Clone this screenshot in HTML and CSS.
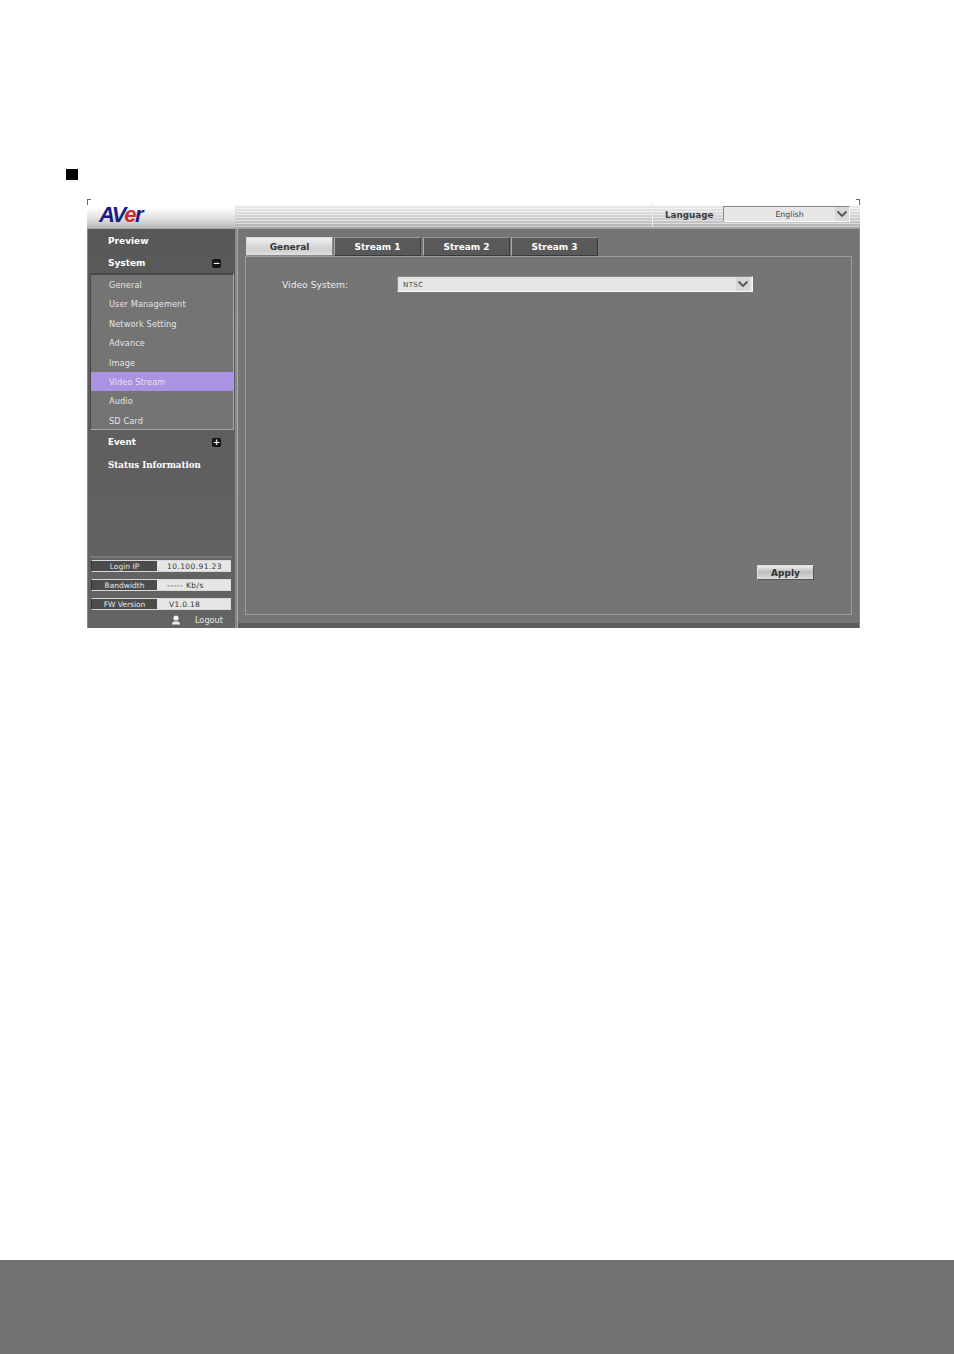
FILE: index.html
```html
<!DOCTYPE html>
<html lang="en">
<head>
<meta charset="utf-8">
<title>Video Stream</title>
<link rel="stylesheet" href="styles.css">
</head>
<body>
<main class="sheet">
  <div class="bullet"></div>
  <section class="app">
    <header class="topbar">
      <div class="logo-cell"><span class="logo">AV<span class="logo-e">e</span>r</span></div>
      <div class="top-fill"></div>
      <div class="lang">
        <span class="lang-label">Language</span>
        <div class="select lang-select">
          <span class="lang-value">English</span>
          <span class="arrow"><svg viewBox="0 0 12 8" width="12" height="8"><path d="M1.500 1.500 6 6l4.500-4.500" fill="none" stroke="#555" stroke-width="1.800"/></svg></span>
        </div>
      </div>
    </header>
    <div class="body">
      <aside class="side">
        <nav class="nav">
          <div class="nav-head">Preview</div>
          <div class="nav-head">System<span class="tog">&minus;</span></div>
          <ul class="sub">
            <li>General</li>
            <li>User Management</li>
            <li>Network Setting</li>
            <li>Advance</li>
            <li>Image</li>
            <li class="on">Video Stream</li>
            <li>Audio</li>
            <li>SD Card</li>
          </ul>
          <div class="nav-head event">Event<span class="tog">+</span></div>
          <div class="nav-head status">Status Information</div>
        </nav>
        <div class="info">
          <div class="info-row"><span class="k">Login IP</span><span class="v ip">10.100.91.23</span></div>
          <div class="info-row"><span class="k">Bandwidth</span><span class="v dash">----- Kb/s</span></div>
          <div class="info-row"><span class="k">FW Version</span><span class="v vers">V1.0.18</span></div>
        </div>
        <div class="logout">
          <svg class="user" viewBox="0 0 10 10" width="10" height="10"><circle cx="5" cy="3" r="2.600" fill="#f2f2f2"/><path d="M1 9.500c0-2.500 1.500-3 4-3s4 .5 4 3z" fill="#f2f2f2"/></svg>
          <span>Logout</span>
        </div>
      </aside>
      <div class="content">
        <div class="tabs">
          <div class="tab active">General</div>
          <div class="tab">Stream 1</div>
          <div class="tab t3">Stream 2</div>
          <div class="tab">Stream 3</div>
        </div>
        <div class="panel">
          <div class="field">
            <label class="field-label">Video System:</label>
            <div class="select sys-select">
              <span class="sys-value">NTSC</span>
              <span class="arrow sys-arrow"><svg viewBox="0 0 12 8" width="12" height="8"><path d="M1.500 1.500 6 6l4.500-4.500" fill="none" stroke="#555" stroke-width="1.800"/></svg></span>
            </div>
          </div>
          <div class="actions"><button class="apply" type="button">Apply</button></div>
        </div>
        <div class="strip"></div>
      </div>
    </div>
  </section>
</main>
<footer class="foot"></footer>
</body>
</html>
```
FILE: styles.css
```css
* { box-sizing: border-box; }
html, body { margin: 0; padding: 0; background: #fff; }
body { width: 954px; height: 1354px; display: flex; flex-direction: column; font-family: "DejaVu Sans", Verdana, sans-serif; overflow: hidden; }
.sheet { height: 1260px; padding-top: 169px; }
.foot { height: 94px; background: #727272; }
.bullet { width: 12px; height: 11px; background: #000; margin-left: 66px; }
.app { width: 773px; height: 429px; margin: 19px 0 0 87px; display: flex; flex-direction: column; }

.topbar { position: relative; height: 30px; display: flex; background:
  linear-gradient(to bottom, #fff 0 6px, transparent 6px),
  repeating-linear-gradient(to bottom, rgba(255,255,255,.4) 0 1px, rgba(0,0,0,.04) 1px 3px),
  linear-gradient(to bottom, #fff 0, #ececec 35%, #c8c8c8 85%, #aaa 100%);
  border-bottom: 1px solid #a2a2a2; }
.topbar::before, .topbar::after { content: ""; position: absolute; top: 0; width: 3px; height: 5px; border-top: 1px solid #666; }
.topbar::before { left: 0; border-left: 1px solid #666; }
.topbar::after { right: 0; border-right: 1px solid #666; }
.logo-cell { width: 148px; padding: 4px 0 0 12px; background: linear-gradient(to bottom, #fff 0, #fff 30%, #dedede 70%, #b8b8b8 100%); }
.logo { font: italic bold 22px/24px "Liberation Sans", Arial, sans-serif; color: #1c1a86; letter-spacing: -1.500px; }
.logo-e { color: #cf2b2b; }
.top-fill { flex: 1; }
.lang { width: 208px; display: flex; align-items: flex-start; border-left: 1px solid #eee; margin: 3px 0 2px; }
.lang-label { font-size: 8.800px; line-height: 12px; font-weight: bold; color: #3c3c3c; margin: 7px 0 0 12px; width: 58px; }
.select { display: flex; align-items: center; background: #e6e6e6; border: 1px solid #8a8a7e; border-right-color: #fafafa; border-bottom-color: #fafafa; }
.lang-select { width: 127px; height: 16px; margin-top: 4px; }
.lang-value { flex: 1; font-size: 7.800px; color: #444; text-align: center; padding-left: 20px; }
.arrow { width: 14px; height: 14px; background: #d8d8d8; display: flex; align-items: center; justify-content: center; }
.sys-arrow { margin-right: 2px; }

.body { flex: 1; display: flex; border-left: 1px solid #888; border-right: 1px solid #888; }
.side { width: 148px; display: flex; flex-direction: column; background: linear-gradient(to bottom, #585858, #646464); }
.nav { flex: 1; }
.nav-head { height: 22px; padding: 2px 14px 0 20px; display: flex; align-items: center; justify-content: space-between; color: #fff; font-size: 9px; font-weight: bold; }
.tog { width: 9px; height: 9px; border-radius: 2px; background: #141414; color: #fff; font-size: 9px; line-height: 9px; text-align: center; }
.sub { list-style: none; margin: 0 1px 0 2px; padding: 0; height: 157px; background: #747474; border: 1px solid #4a4a4a; border-bottom-color: #a8a8a8; border-right-color: #a8a8a8; border-top-width: 2px; }
.sub li { height: 19.400px; padding: 1px 0 0 18px; line-height: 19px; color: #e4e4e4; font-size: 8.200px; letter-spacing: .1px; }
.sub li.on { background: #ab93e3; }
.event { margin-top: 1px; padding-top: 0; font-size: 8.700px; }
.status { margin-top: 1px; padding-top: 0; font-family: "DejaVu Serif", serif; font-size: 8.700px; }
.info { margin: 0 3px 0 2px; display: flex; flex-direction: column; gap: 7px; padding: 2px 1px 0; border-top: 2px solid #787878; }
.info-row { height: 12px; display: flex; font-size: 7.500px; line-height: 11px; border: 1px solid #d8d8d8; border-left-color: #333; }
.k { width: 65px; background: #4c4c4c; color: #e6e6e6; text-align: center; }
.v { flex: 1; background: #e6e6e6; color: #333; text-align: center; letter-spacing: .3px; }
.ip { padding-left: 2px; letter-spacing: .4px; }
.dash { text-align: left; padding-left: 10px; letter-spacing: .5px; }
.vers { text-align: left; padding-left: 12px; }
.logout { height: 17px; padding: 1px 12px 0 83px; margin-top: 1px; display: flex; align-items: center; justify-content: space-between; color: #e6e6e6; font-size: 8.200px; }
.user { flex: none; }

.content { flex: 1; display: flex; flex-direction: column; background: #757575; border-left: 1px solid #a8a8a8; margin-left: 2px; box-shadow: -2px 0 0 #8a8a8a; padding: 8px 7px 0; }
.tabs { display: flex; gap: 1px; padding-left: 1px; height: 19px; }
.tab { width: 87px; height: 19px; background: #595959; border: 1px solid #3a3a3a; border-top-color: #999; border-left-color: #aaa; color: #fff; font-size: 9px; font-weight: bold; text-align: center; line-height: 18px; }
.tab.active { background: linear-gradient(to bottom, #f0f0f0, #cfcfcf 70%, #e0e0e0); color: #333; border-color: #d8d8d8 #888 #888 #d8d8d8; }
.t3 { margin-left: 1px; }
.panel { width: 607px; height: 359px; border: 1px solid #9c9c9c; display: flex; flex-direction: column; justify-content: space-between; padding: 19px 37px 34px 36px; }
.field { display: flex; align-items: center; }
.field-label { width: 115px; color: #ececec; font-size: 9.200px; }
.sys-select { width: 356px; height: 16px; }
.sys-value { flex: 1; padding: 1px 0 0 5px; font-size: 7px; letter-spacing: .4px; color: #444; }
.actions { display: flex; justify-content: flex-end; }
.apply { width: 57px; height: 15px; padding: 0; font: bold 9px/14px "DejaVu Sans", sans-serif; color: #333; background: linear-gradient(to bottom, #eee, #bdbdbd 45%, #dcdcdc); border: 1px solid #555; border-top-color: #ddd; border-left-color: #ddd; }
.strip { height: 5px; margin: 8px -7px 0; background: #5c5c5c; }
```
